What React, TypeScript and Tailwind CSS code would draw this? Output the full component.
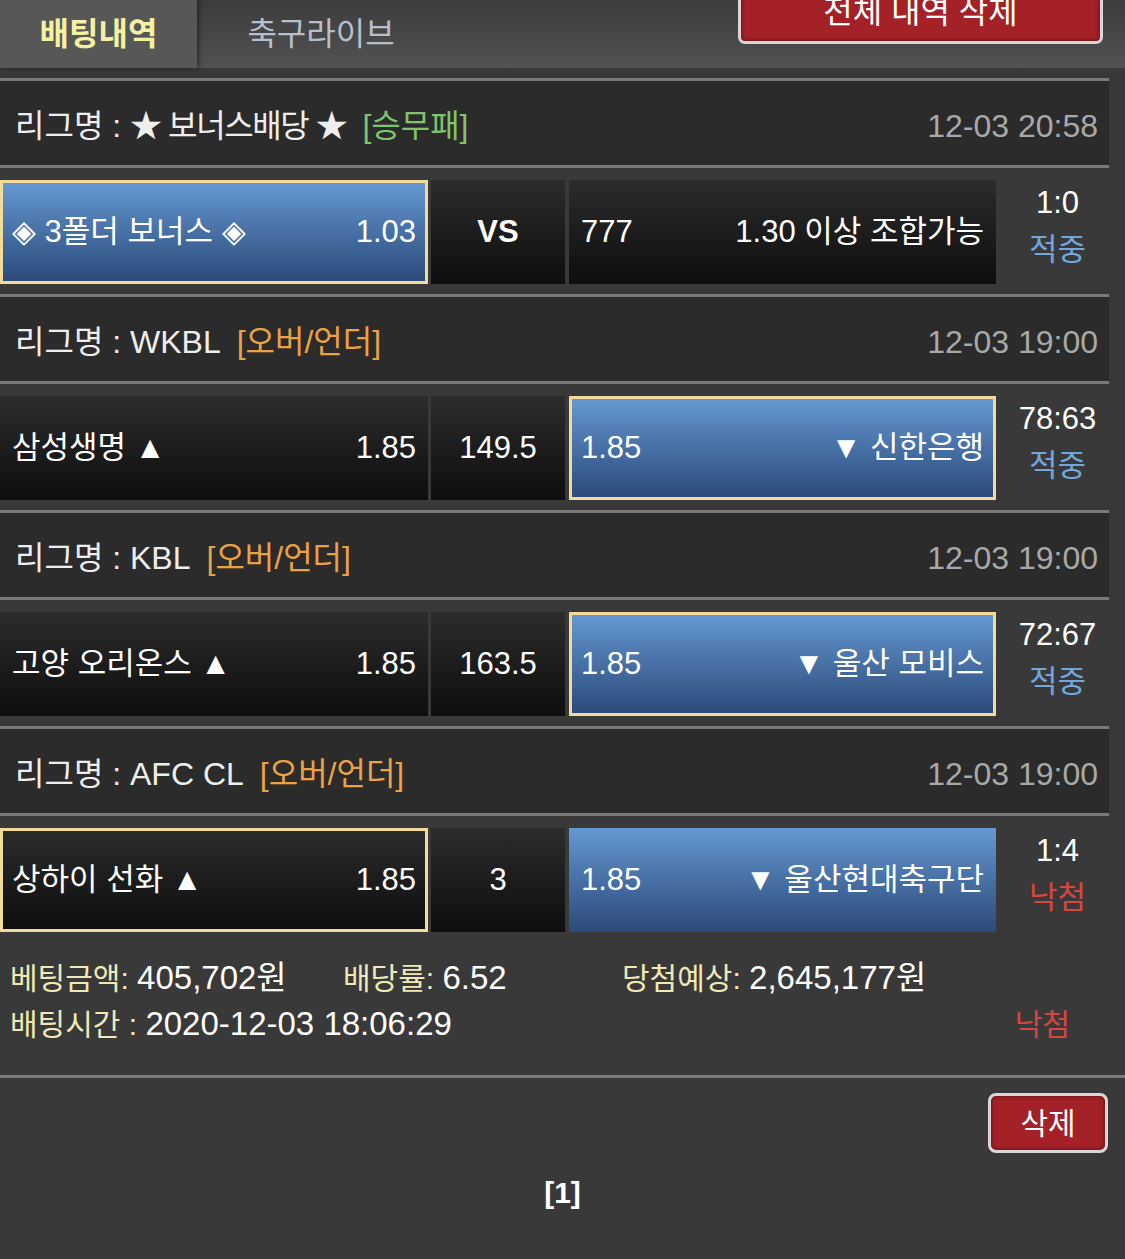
import React from "react";

type Side = {
  name: string;
  odds: string;
  blue?: boolean;
  picked?: boolean;
};

type Match = {
  league: string;
  leagueTight?: boolean;
  type: string;
  typeColor: string;
  time: string;
  home: Side;
  mid: string;
  midBold?: boolean;
  away: Side;
  score: string;
  result: "적중" | "낙첨";
};

const matches: Match[] = [
  {
    league: "★ 보너스배당 ★",
    leagueTight: true,
    type: "[승무패]",
    typeColor: "text-[#7fc46c]",
    time: "12-03 20:58",
    home: { name: "◈ 3폴더 보너스 ◈", odds: "1.03", blue: true, picked: true },
    mid: "VS",
    midBold: true,
    away: { name: "1.30 이상 조합가능", odds: "777" },
    score: "1:0",
    result: "적중",
  },
  {
    league: "WKBL",
    type: "[오버/언더]",
    typeColor: "text-[#eba245]",
    time: "12-03 19:00",
    home: { name: "삼성생명 ▲", odds: "1.85" },
    mid: "149.5",
    away: { name: "▼ 신한은행", odds: "1.85", blue: true, picked: true },
    score: "78:63",
    result: "적중",
  },
  {
    league: "KBL",
    type: "[오버/언더]",
    typeColor: "text-[#eba245]",
    time: "12-03 19:00",
    home: { name: "고양 오리온스 ▲", odds: "1.85" },
    mid: "163.5",
    away: { name: "▼ 울산 모비스", odds: "1.85", blue: true, picked: true },
    score: "72:67",
    result: "적중",
  },
  {
    league: "AFC CL",
    type: "[오버/언더]",
    typeColor: "text-[#eba245]",
    time: "12-03 19:00",
    home: { name: "상하이 선화 ▲", odds: "1.85", picked: true },
    mid: "3",
    away: { name: "▼ 울산현대축구단", odds: "1.85", blue: true },
    score: "1:4",
    result: "낙첨",
  },
];

const boxClass = (side: Side) =>
  [
    "flex h-full items-center justify-between",
    side.blue
      ? "bg-gradient-to-b from-[#6598d2] to-[#2c4b7a]"
      : "bg-gradient-to-b from-[#2c2c2c] to-[#0e0e0e]",
    side.picked ? "border-[3px] border-[#f1dc9c] px-[9px]" : "px-3",
  ].join(" ");

const MatchBlock = ({ m }: { m: Match }) => (
  <div>
    <div className="flex h-[90px] items-center justify-between border-y-[3px] border-[#7a7a7a] bg-[#2b2b2b] pl-[15px] pr-[11px] pt-[6px] text-[32px]">
      <div className="flex items-center">
        <span className="text-[#eeeeee]">
          리그명 :{" "}
          <span className={m.leagueTight ? "tracking-[-1.4px]" : ""}>{m.league}</span>
        </span>
        <span className={`ml-4 ${m.typeColor}`}>{m.type}</span>
      </div>
      <span className="text-[#a9a9a9]">{m.time}</span>
    </div>
    <div className="flex h-[126px] pb-[10px] pt-3 text-[31px] text-white">
      <div className="w-[428px]">
        <div className={boxClass(m.home)}>
          <span>{m.home.name}</span>
          <span>{m.home.odds}</span>
        </div>
      </div>
      <div className="ml-[3px] flex w-[134px] items-center justify-center bg-gradient-to-b from-[#2c2c2c] to-[#0e0e0e]">
        <span className={m.midBold ? "font-bold" : ""}>{m.mid}</span>
      </div>
      <div className="ml-1 w-[427px]">
        <div className={boxClass(m.away)}>
          <span>{m.away.odds}</span>
          <span>{m.away.name}</span>
        </div>
      </div>
      <div className="flex flex-1 flex-col items-center justify-center pb-3 pl-[10px] leading-[47px]">
        <span>{m.score}</span>
        <span className={m.result === "적중" ? "text-[#70a8dd]" : "text-[#d5473f]"}>
          {m.result}
        </span>
      </div>
    </div>
  </div>
);

export default function App() {
  return (
    <div className="min-h-screen overflow-hidden bg-[#393939] font-['Liberation_Sans','Noto_Sans_CJK_KR',sans-serif]">
      <div className="flex h-[68px] items-start bg-gradient-to-b from-[#3c3c3c] to-[#525252]">
        <div className="flex h-full w-[197px] items-center justify-center bg-[#575757] shadow-[2px_0_5px_rgba(0,0,0,0.45)]">
          <span className="text-[32px] font-bold text-[#f4f1a4]">배팅내역</span>
        </div>
        <div className="flex h-full w-[248px] items-center justify-center">
          <span className="text-[32px] text-[#b6bfce]">축구라이브</span>
        </div>
        <button className="-mt-5 ml-auto mr-[22px] flex h-[64px] w-[365px] items-center justify-center rounded-[7px] border-[3px] border-[#dcd6d6] bg-[#a32127] text-[32px] text-white shadow-[inset_0_0_4px_rgba(0,0,0,0.5)]">
          전체 내역 삭제
        </button>
      </div>

      <div className="mr-4 mt-[10px]">
        {matches.map((m, i) => (
          <MatchBlock key={i} m={m} />
        ))}
      </div>

      <div className="pb-[28px] pl-[10px] pr-[55px] pt-[13px] text-[30px] leading-[45px]">
        <div className="flex items-baseline">
          <div className="w-[333px]">
            <span className="text-[#f0e9b6]">베팅금액: </span>
            <span className="text-[33px] text-white">405,702원</span>
          </div>
          <div className="w-[279px]">
            <span className="text-[#f0e9b6]">배당률: </span>
            <span className="text-[33px] text-white">6.52</span>
          </div>
          <div>
            <span className="text-[#f0e9b6]">당첨예상: </span>
            <span className="text-[33px] text-white">2,645,177원</span>
          </div>
        </div>
        <div className="flex items-baseline justify-between">
          <div>
            <span className="text-[#f0e9b6]">배팅시간 : </span>
            <span className="text-[33px] text-white">2020-12-03 18:06:29</span>
          </div>
          <span className="text-[#d5473f]">낙첨</span>
        </div>
      </div>

      <div className="border-t-[3px] border-[#7a7a7a]">
        <div className="flex justify-end pr-[17px] pt-[15px]">
          <button className="flex h-[60px] w-[120px] items-center justify-center rounded-[8px] border-[3px] border-[#dcd6d6] bg-[#a32127] text-[30px] text-white shadow-[inset_0_0_4px_rgba(0,0,0,0.5)]">
            삭제
          </button>
        </div>
        <div className="mt-5 text-center text-[30px] font-bold leading-[40px] text-white">
          [1]
        </div>
      </div>
    </div>
  );
}
